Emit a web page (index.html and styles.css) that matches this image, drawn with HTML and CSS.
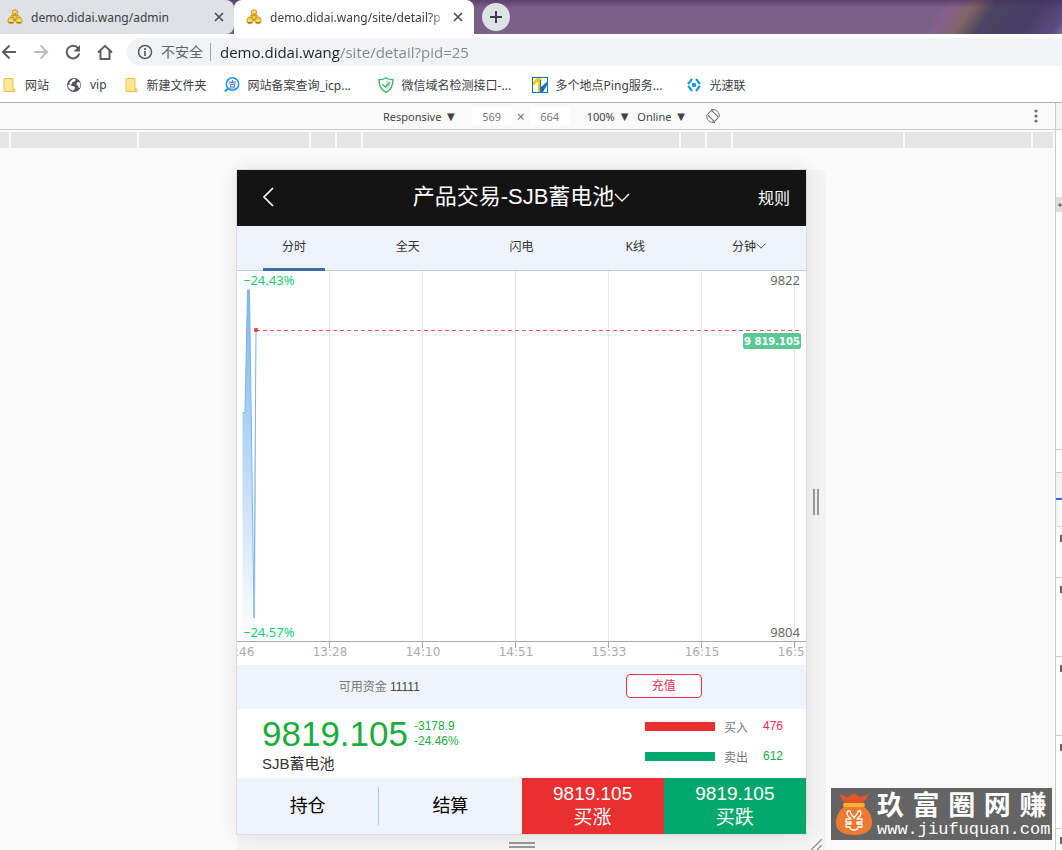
FILE: index.html
```html
<!DOCTYPE html>
<html lang="zh-CN">
<head>
    <meta charset="UTF-8">
    <meta name="viewport" content="width=device-width, initial-scale=1.0">
    <title>demo.didai.wang/site/detail?pid=25</title>
    <link rel="stylesheet" href="styles.css">
</head>
<body>
    <svg class="defs" width="0" height="0" aria-hidden="true">
        <symbol id="favicon" viewBox="0 0 16 16">
            <g fill="#f0cf4e" stroke="#c99a24">
                <circle cx="8" cy="3.6" r="2.800"/>
                <path d="M4.500 6.500h7L13 9H3z"/>
                <circle cx="4" cy="11.600" r="3.200"/>
                <circle cx="12" cy="11.600" r="3.200"/>
                <circle cx="8" cy="8.400" r="2"/>
            </g>
            <path d="M2.400 11.400h3M10.400 11.400h3M7 3h2" stroke="#fff3b0"/>
            <path d="M2 13.500h4M10 13.500h4M7 5h2M7 11h2" stroke="#a87c18"/>
        </symbol>
        <symbol id="close" viewBox="0 0 10 10">
            <path d="M1 1l8 8M9 1L1 9" stroke="#4b4f54" stroke-width="1.7"/>
        </symbol>
        <symbol id="folder" viewBox="0 0 14 16">
            <path d="M1.5 1.5h9v10.5h2v2.5h-11z" fill="#ffe694" stroke="#e8c34c"/>
            <path d="M10.500 12v2.500" stroke="#e8c34c"/>
        </symbol>
        <symbol id="down" viewBox="0 0 16 9">
            <path d="M1 1l7 7 7-7" fill="none" stroke="currentColor" stroke-width="1.4"/>
        </symbol>
    </svg>

    <header class="browser">
        <div class="tab-strip">
            <div class="tab">
                <svg class="favicon"><use href="#favicon"/></svg>
                <a href="#admin" class="tab-title">demo.didai.wang/admin</a>
                <button class="tab-close" aria-label="关闭"><svg width="10" height="10"><use href="#close"/></svg></button>
            </div>
            <div class="tab active">
                <svg class="favicon"><use href="#favicon"/></svg>
                <a href="#detail" class="tab-title">demo.didai.wang/site/detail?p</a>
                <button class="tab-close" aria-label="关闭"><svg width="10" height="10"><use href="#close"/></svg></button>
            </div>
            <button class="new-tab" aria-label="新标签页">
                <svg width="12" height="12" viewBox="0 0 12 12"><path d="M6 0v12M0 6h12" stroke="#3c4043" stroke-width="2"/></svg>
            </button>
        </div>

        <div class="toolbar">
            <button class="nav-btn" aria-label="后退">
                <svg width="16" height="16" viewBox="0 0 16 16"><path d="M15 8H2M8.500 1.500L2 8l6.500 6.500" fill="none" stroke="#5a5e63" stroke-width="2"/></svg>
            </button>
            <button class="nav-btn" aria-label="前进">
                <svg width="16" height="16" viewBox="0 0 16 16"><path d="M1 8h13M7.500 1.500L14 8l-6.500 6.500" fill="none" stroke="#babcbe" stroke-width="2"/></svg>
            </button>
            <button class="nav-btn" aria-label="刷新">
                <svg width="16" height="16" viewBox="0 0 16 16"><path d="M13.200 4.400A6.300 6.300 0 1 0 14.200 9.500" fill="none" stroke="#5a5e63" stroke-width="2"/><path d="M15 1v6.500H8.500z" fill="#5a5e63"/></svg>
            </button>
            <button class="nav-btn" aria-label="主页">
                <svg width="16" height="16" viewBox="0 0 16 16"><path d="M1 8.500L8 1.800l7 6.700M3.500 7v8h9V7" fill="none" stroke="#5a5e63" stroke-width="2"/></svg>
            </button>
            <div class="omnibox">
                <svg width="16" height="16" viewBox="0 0 16 16"><circle cx="8" cy="8" r="6.500" fill="none" stroke="#5a5e63" stroke-width="1.5"/><path d="M8 7v5M8 4v2" stroke="#5a5e63" stroke-width="1.7"/></svg>
                <label for="url" class="security">不安全</label>
                <input type="text" id="url" class="url" value="demo.didai.wang/site/detail?pid=25">
            </div>
        </div>

        <nav class="bookmarks">
            <a href="#b1"><svg width="15" height="16"><use href="#folder"/></svg>网站</a>
            <a href="#b2">
                <svg width="16" height="16" viewBox="0 0 16 16"><circle cx="8" cy="8" r="7" fill="#53575b"/><path d="M8 1.500c3 1 1 3-1 3.500s0 2-2 2.500 1 1.500 3 2 1 2.500-.500 4C4 13 1.600 10.500 2 7.500c1 1 2 .500 1.500-1S6 3 8 1.500zM11 5.500c1-1 2-.500 3 .500.600 2 .300 3.500-.500 5-1.500 0-1-2-2-2.500s-1.500-2-.500-3z" fill="#fff"/></svg>vip
            </a>
            <a href="#b3"><svg width="15" height="16"><use href="#folder"/></svg>新建文件夹</a>
            <a href="#b4" class="long">
                <svg width="16" height="16" viewBox="0 0 16 16" fill="none" stroke="#2490ee"><circle cx="8.500" cy="7" r="6.200" stroke-width="1.500"/><path d="M4 11.500L1 14.500" stroke-width="2"/><path d="M5 5h7M8.500 3v3M8.500 5L5.500 7M8.500 5l3 2M6.500 7.500h4v2.500h-4zM5.500 11h6" stroke="#4a74c9" stroke-width=".9"/></svg>网站备案查询_icp...
            </a>
            <a href="#b5" class="long">
                <svg width="16" height="16" viewBox="0 0 16 16"><path d="M8 .800c2 1.500 4.500 2 7 2 0 6-1.500 10-7 12.500C2.500 12.800 1 8.800 1 2.800c2.500 0 5-.500 7-2z" fill="#fff" stroke="#38b764" stroke-width="1.400"/><path d="M8 3c1.500 1 3 1.500 5 1.500 0 4-1.500 7-5 9z" fill="#dce5e0"/><path d="M4.500 7.500L7.500 10l4-4.500" fill="none" stroke="#38b764" stroke-width="1.500"/></svg>微信域名检测接口-...
            </a>
            <a href="#b6" class="long">
                <svg width="16" height="16" viewBox="0 0 16 16"><rect x=".5" y=".5" width="15" height="15" fill="#fff" stroke="#0b70b8"/><path d="M1 7V5l4-4h4v14H6V5L2 8z" fill="#ffc907"/><path d="M9 3v7l6-5v3l-4 7H8V3z" fill="#0b70b8"/></svg>多个地点Ping服务...
            </a>
            <a href="#b7">
                <svg width="16" height="16" viewBox="0 0 16 16"><path d="M6 2L1.500 8 6 14M10 2l4.500 6L10 14" fill="none" stroke="#1797dc" stroke-width="2.200" stroke-dasharray="6.500 2"/><circle cx="8" cy="8" r="2.200" fill="#1797dc"/></svg>光速联
            </a>
        </nav>
    </header>

    <div class="workspace">
        <main class="emulator">
            <form class="device-bar">
                <label class="picker"><select aria-label="Device"><option>Responsive</option></select><span>▼</span></label>
                <input type="text" class="size width" aria-label="Width" value="569">
                <span class="times">×</span>
                <input type="text" class="size" aria-label="Height" value="664">
                <label class="picker zoom"><select aria-label="Zoom"><option>100%</option></select><span>▼</span></label>
                <label class="picker"><select aria-label="Throttling"><option>Online</option></select><span>▼</span></label>
                <button type="button" class="rotate" aria-label="Rotate">
                    <svg width="14" height="14" viewBox="0 0 14 14" fill="none" stroke="#6e6e6e"><rect x="4" y="2" width="6" height="10" rx="1" transform="rotate(-45 7 7)"/><path d="M5 .900A6.300 6.300 0 0 1 13.200 8M9 13.100A6.300 6.300 0 0 1 .800 6M5 .900l3 0M9 13.100l-3 0"/></svg>
                </button>
                <button type="button" class="more" aria-label="More options">
                    <svg width="4" height="14" viewBox="0 0 4 14" fill="#6e6e6e"><circle cx="2" cy="2" r="1.600"/><circle cx="2" cy="7" r="1.600"/><circle cx="2" cy="12" r="1.600"/></svg>
                </button>
            </form>

            <div class="ruler">
                <i class="edge"></i><i class="xl"></i><i class="lg"></i><i class="sm"></i><i class="sm"></i><i class="main"></i><i class="sm"></i><i class="sm"></i><i class="lg"></i><i class="xl"></i><i class="rest"></i>
            </div>

            <div class="stage">
                <section class="phone">
                    <header class="app-header">
                        <a href="#back" class="back" aria-label="返回"><svg width="12" height="20" viewBox="0 0 12 20"><path d="M11 1L2 10l9 9" fill="none" stroke="#fff" stroke-width="1.700"/></svg></a>
                        <h1>产品交易-SJB蓄电池<svg width="16" height="9"><use href="#down"/></svg></h1>
                        <a href="#rules" class="rules">规则</a>
                    </header>
                    <nav class="periods">
                        <a href="#p1" class="on">分时</a>
                        <a href="#p2">全天</a>
                        <a href="#p3">闪电</a>
                        <a href="#p4">K线</a>
                        <a href="#p5">分钟<svg width="10" height="6"><use href="#down"/></svg></a>
                    </nav>

                    <svg class="chart" viewBox="0 0 569 394">
                        <defs>
                            <linearGradient id="area" x1="0" y1="0" x2="0" y2="1">
                                <stop offset="0" stop-color="#7cb5ec"/>
                                <stop offset="1" stop-color="#7cb5ec" stop-opacity="0"/>
                            </linearGradient>
                        </defs>
                        <path class="grid" d="M92.500 0v370M185.500 0v370M278.500 0v370M371.500 0v370M464.500 0v370M557.500 0v370"/>
                        <path d="M5.500 141.500H8L10.500 19H12.500L17 347L19 59V370H5.500z" fill="url(#area)"/>
                        <path d="M5.500 141.500H8L10.500 19H12.500L17 347L19 59" fill="none" stroke="#7cb5ec"/>
                        <path class="axis" d="M0 370.500H569M92.500 370v7M185.500 370v7M278.500 370v7M371.500 370v7M464.500 370v7M557.500 370v7"/>
                        <path d="M19 59.500H563" stroke="#ee5b62" stroke-dasharray="4 3"/>
                        <rect x="17" y="57" width="4" height="4" rx="1" fill="#f5494c"/>
                        <g class="ticks" text-anchor="middle">
                            <text x="0" y="385">12:46</text>
                            <text x="93" y="385">13:28</text>
                            <text x="186" y="385">14:10</text>
                            <text x="279" y="385">14:51</text>
                            <text x="372" y="385">15:33</text>
                            <text x="465" y="385">16:15</text>
                            <text x="558" y="385">16:57</text>
                        </g>
                        <g class="change">
                            <text x="6" y="14">−24.43%</text>
                            <text x="6" y="366">−24.57%</text>
                        </g>
                        <g class="limits" text-anchor="end">
                            <text x="563" y="14">9822</text>
                            <text x="563" y="366">9804</text>
                        </g>
                        <rect x="506" y="62" width="58" height="16" rx="2" fill="#58c994"/>
                        <text class="flag" x="535" y="74" text-anchor="middle">9 819.105</text>
                    </svg>

                    <div class="funds">
                        <p>可用资金 <span>11111</span></p>
                        <div><button class="recharge">充值</button></div>
                    </div>

                    <div class="quote">
                        <div class="quote-left">
                            <div class="price">
                                <strong>9819.105</strong>
                                <p>-3178.9<br>-24.46%</p>
                            </div>
                            <p class="name">SJB蓄电池</p>
                        </div>
                        <dl class="volume">
                            <div class="buy"><i></i><dt>买入</dt><dd>476</dd></div>
                            <div class="sell"><i></i><dt>卖出</dt><dd>612</dd></div>
                        </dl>
                    </div>

                    <div class="actions">
                        <a href="#hold" class="hold">持仓</a>
                        <a href="#settle">结算</a>
                        <button class="up">9819.105<br>买涨</button>
                        <button class="fall">9819.105<br>买跌</button>
                    </div>
                </section>
                <div class="handle-right"><i></i></div>
                <div class="handle-bottom"><i></i></div>
                <div class="handle-corner"><svg width="12" height="12" viewBox="0 0 12 12"><path d="M1 12L12 1M7 12l5-5" stroke="#999" stroke-width="1.500"/></svg></div>
            </div>
        </main>

        <aside class="devtools">
            <div class="dt-head"></div>
            <div class="dt-blank"></div>
            <div class="dt-grip"></div>
            <div class="dt-tree"></div>
            <div class="dt-crumbs"></div>
            <div class="dt-tabs"></div>
            <div class="dt-filter"></div>
            <div class="dt-rule short"><i></i></div>
            <div class="dt-rule"><i></i></div>
            <div class="dt-rule"><i></i></div>
            <div class="dt-rule tall"><i></i></div>
            <div class="dt-rule last"><i></i></div>
        </aside>
    </div>

    <div class="watermark">
        <svg width="38" height="44" viewBox="0 0 38 44">
            <path d="M4 2l9 3 6-4 6 4 9-3-6 10H10z" fill="#e0532b"/>
            <path d="M10 14C3 19 1 25 1 31c0 8 7 12 18 12s18-4 18-12c0-6-2-12-9-17z" fill="#ee7a30"/>
            <rect x="8" y="11" width="22" height="4" rx="2" fill="#f5b32f"/>
            <path d="M19 26c-1-3-4-3-4-7-3-1-4 2-2 5l3 3h-5v3h5v2h-5v3h4c0 2 2 3 4 3s4-1 4-3h4v-3h-5v-2h5v-3h-5l3-3c2-3 1-6-2-5 0 4-3 4-4 7z" fill="none" stroke="#fff" stroke-width="1.300" stroke-linejoin="round"/>
        </svg>
        <div class="mark-text">
            <p class="mark-name"><span>玖</span><span>富</span><span>圈</span><span>网</span><span>赚</span></p>
            <p class="mark-url">www.jiufuquan.com</p>
        </div>
    </div>
</body>
</html>
```

FILE: styles.css
```css
* {
    box-sizing: border-box;
}
body {
    margin: 0;
    min-height: 100vh;
    display: flex;
    flex-direction: column;
    overflow: hidden;
    position: relative;
    font-family: "Noto Sans", "Noto Sans CJK SC", sans-serif;
    font-size: 12px;
    color: #3c4043;
    background: #fff;
}
p, h1, dl, dd {
    margin: 0;
}
a {
    color: inherit;
    text-decoration: none;
}
button, input, select {
    font: inherit;
    color: inherit;
    border: none;
    padding: 0;
    background: none;
}
svg {
    flex: none;
}
.defs {
    position: absolute;
}

/* browser window */
.tab-strip {
    display: flex;
    height: 34px;
    background:
        linear-gradient(rgba(70, 45, 90, 0.6), rgba(70, 45, 90, 0) 8px),
        linear-gradient(125deg, rgba(0, 0, 0, 0) 87%, #86608f 88%, #806565 90%, #4b4462 92%, #463e66 96%, #5a4a80 99%, #866aa0),
        #7a5f87;
}
.tab {
    display: flex;
    align-items: center;
    width: 234px;
    padding: 0 7px;
    background: #dee1e6;
    border-radius: 0 8px 8px 0;
}
.tab.active {
    width: 240px;
    padding: 0 8px 0 12px;
    background: #fff;
    border-radius: 8px 8px 0 0;
}
.favicon {
    width: 16px;
    height: 16px;
}
.tab-title {
    flex: 1;
    margin: 0 8px;
    overflow: hidden;
    white-space: nowrap;
}
.active .tab-title {
    margin-right: 2px;
    -webkit-mask-image: linear-gradient(90deg, #000 90%, transparent);
    mask-image: linear-gradient(90deg, #000 90%, transparent);
}
.tab-close {
    display: flex;
    padding: 3px;
}
.new-tab {
    display: flex;
    align-items: center;
    justify-content: center;
    width: 28px;
    height: 28px;
    margin: 3px 8px;
    border-radius: 50%;
    background: #dee1e6;
}
.toolbar {
    display: flex;
    align-items: center;
    gap: 16px;
    height: 36px;
    padding-left: 1px;
}
.nav-btn {
    display: flex;
}
.omnibox {
    flex: 1;
    display: flex;
    align-items: center;
    height: 28px;
    margin-left: -2px;
    padding-left: 10px;
    border-radius: 14px 0 0 14px;
    background: #f1f3f4;
}
.security {
    margin-left: 8px;
    padding-right: 7px;
    font-size: 14px;
    line-height: 18px;
    color: #5f6368;
    border-right: 1px solid #9aa0a6;
}
.url {
    flex: 1;
    margin-left: 9px;
    font-family: "Open Sans", sans-serif;
    font-size: 15px;
    color: transparent;
    background: linear-gradient(90deg, #202124 120px, #80868b 120px);
    -webkit-background-clip: text;
    background-clip: text;
}
.bookmarks {
    display: flex;
    align-items: center;
    gap: 17px;
    height: 32px;
    padding: 0 2px 3px;
    white-space: nowrap;
}
.bookmarks a {
    display: flex;
    align-items: center;
    gap: 8px;
}
.bookmarks .long {
    width: 137px;
}

/* device emulation */
.workspace {
    flex: 1;
    display: flex;
    border-top: 1px solid #b0b0b0;
}
.emulator {
    flex: 1;
    background: #fafafa;
}
.device-bar {
    display: flex;
    align-items: center;
    justify-content: center;
    height: 27px;
    padding-left: 48px;
    border-bottom: 1px solid #ccc;
    position: relative;
}
.picker {
    display: flex;
    align-items: center;
    gap: 5px;
    margin-right: 9px;
    font-size: 11px;
    color: #444;
}
.picker select {
    appearance: none;
}
.picker span {
    font-family: "DejaVu Sans", sans-serif;
    font-size: 10px;
}
.picker.zoom {
    margin-left: 17px;
}
.size {
    width: 40px;
    height: 18px;
    font-size: 11px;
    text-align: center;
    color: #777;
    background: #fff;
}
.size.width {
    margin-left: 8px;
}
.times {
    width: 18px;
    font-size: 14px;
    text-align: center;
    color: #777;
}
.rotate {
    display: flex;
    margin-left: 12px;
}
.more {
    position: absolute;
    right: 17px;
    display: flex;
}
.ruler {
    display: flex;
    gap: 2px;
    height: 18px;
    padding: 2px 2px 0 0;
}
.ruler i {
    flex: none;
    background: #e5e5e5;
}
.ruler .edge { width: 9px; }
.ruler .xl { width: 126px; }
.ruler .lg { width: 170px; }
.ruler .sm { width: 24px; }
.ruler .main { width: 316px; }
.ruler .rest { flex: 1; }

.stage {
    display: grid;
    grid-template-columns: minmax(0, 569px) 20px;
    justify-content: center;
    padding: 22px 0 0 8px;
}
.phone {
    background: #fff;
    box-shadow: 0 0 0 1px #ddd, 0 0 20px rgba(0, 0, 0, 0.1);
    z-index: 1;
}
.handle-right, .handle-bottom, .handle-corner {
    display: flex;
    align-items: center;
    justify-content: center;
    background: #f4f4f4;
}
.handle-right i {
    width: 6px;
    height: 26px;
    border: solid #999;
    border-width: 0 2px;
}
.handle-bottom {
    height: 16px;
    padding-top: 5px;
}
.handle-bottom i {
    width: 26px;
    height: 6px;
    border: solid #999;
    border-width: 2px 0;
}
.handle-corner {
    padding-top: 4px;
}

/* trading page */
.app-header {
    display: flex;
    align-items: center;
    justify-content: space-between;
    height: 56px;
    padding: 0 16px 2px 25px;
    color: #fff;
    background: #131313;
}
.back {
    display: flex;
    width: 23px;
}
.app-header h1 {
    display: flex;
    align-items: center;
    font: 22px/32px "Liberation Sans", "Noto Sans CJK SC", sans-serif;
}
.rules {
    font-size: 16px;
}
.periods {
    display: flex;
    height: 45px;
    border-bottom: 1px solid #c8cbcf;
    background: #eff4fc;
}
.periods a {
    flex: 1;
    display: flex;
    align-items: center;
    justify-content: center;
    padding-bottom: 4px;
    color: #333;
    position: relative;
}
.periods .on::after {
    content: "";
    position: absolute;
    bottom: -1px;
    width: 62px;
    height: 3px;
    background: #3a6ea5;
}
.chart {
    display: block;
    width: 100%;
    font-family: "DejaVu Sans", sans-serif;
    font-size: 12px;
}
.grid {
    stroke: #e8e8e8;
}
.axis {
    stroke: #a8a8a8;
}
.ticks {
    fill: #aaa;
}
.change {
    font-family: "Noto Sans", sans-serif;
    font-size: 13px;
    fill: #16cc70;
}
.limits {
    font-family: "Noto Sans", sans-serif;
    font-size: 13px;
    fill: #666;
}
.flag {
    font-size: 10px;
    font-weight: bold;
    fill: #fff;
}
.funds {
    display: flex;
    align-items: center;
    height: 44px;
    font-family: "Liberation Sans", "Noto Sans CJK SC", sans-serif;
    color: #777;
    background: #eff4fc;
}
.funds > * {
    flex: 1;
    padding-bottom: 3px;
    text-align: center;
}
.funds span {
    color: #444;
}
.recharge {
    width: 76px;
    height: 24px;
    padding-bottom: 2px;
    color: #e92f4a;
    background: #fff;
    border: 1px solid #e92f4a;
    border-radius: 4px;
}
.quote {
    display: flex;
    justify-content: space-between;
    height: 69px;
    padding: 6px 23px 0 25px;
    font-family: "Liberation Sans", "Noto Sans CJK SC", sans-serif;
}
.price {
    display: flex;
    align-items: center;
    gap: 6px;
    height: 38px;
    color: #1aad3e;
}
.price strong {
    font-size: 35px;
    font-weight: normal;
}
.price p {
    line-height: 15px;
}
.name {
    font-size: 15px;
    line-height: 22px;
    color: #333;
}
.volume > div {
    display: flex;
    align-items: center;
    height: 22px;
    margin-bottom: 8px;
}
.volume i {
    width: 70px;
    height: 9px;
    margin-right: 9px;
}
.volume dt {
    margin-right: 15px;
    color: #777;
}
.buy { color: #e92f4a; }
.buy i { background: #e92f2f; }
.sell { color: #1aad3e; }
.sell i { background: #02a86b; }
.actions {
    display: grid;
    grid-template-columns: repeat(4, 1fr);
    height: 56px;
    font: 18px/24px "Liberation Sans", "Noto Sans CJK SC", sans-serif;
    color: #000;
    background: #eff4fc;
}
.actions a {
    display: flex;
    align-items: center;
    justify-content: center;
}
.hold {
    height: 38px;
    margin: 9px 0;
    border-right: 1px solid #b4cfee;
}
.actions button {
    font-size: 19px;
    color: #fff;
}
.up { background: #e92f2f; }
.fall { background: #02a86b; }

/* edge of the inspector panel */
.devtools {
    width: 7px;
    overflow: hidden;
    border-left: 1px solid #ccc;
}
.devtools div {
    border-bottom: 1px solid #ccc;
}
.dt-head {
    height: 27px;
    background: #f3f3f3;
}
.devtools .dt-blank {
    height: 67px;
    border: none;
}
.devtools .dt-grip {
    height: 15px;
    border: none;
    background: radial-gradient(circle at 4px 8px, #666 1px, #ddd 2px);
}
.dt-tree {
    height: 238px;
}
.dt-crumbs {
    height: 23px;
}
.devtools .dt-tabs {
    height: 27px;
    background: #f3f3f3;
    border-bottom: 2px solid #1a73e8;
}
.dt-filter {
    height: 27px;
    border-left: 3px solid #f3f3f3;
}
.dt-rule {
    height: 79px;
    padding: 8px 0 0 4px;
}
.dt-rule.short {
    height: 51px;
}
.dt-rule.tall {
    height: 93px;
}
.dt-rule.last {
    height: 22px;
}
.dt-rule i {
    display: block;
    width: 2px;
    height: 7px;
    background: #666;
}

.watermark {
    position: absolute;
    right: 10px;
    bottom: 11px;
    display: flex;
    align-items: center;
    width: 221px;
    height: 52px;
    padding: 0 4px;
    color: #fff;
    background: #646464;
}
.mark-text {
    flex: 1;
    margin-left: 4px;
}
.mark-name {
    display: flex;
    justify-content: space-between;
    padding-right: 4px;
    font-size: 27px;
    font-weight: bold;
    line-height: 32px;
}
.mark-url {
    font: 17px/18px "Liberation Mono", monospace;
}
```
